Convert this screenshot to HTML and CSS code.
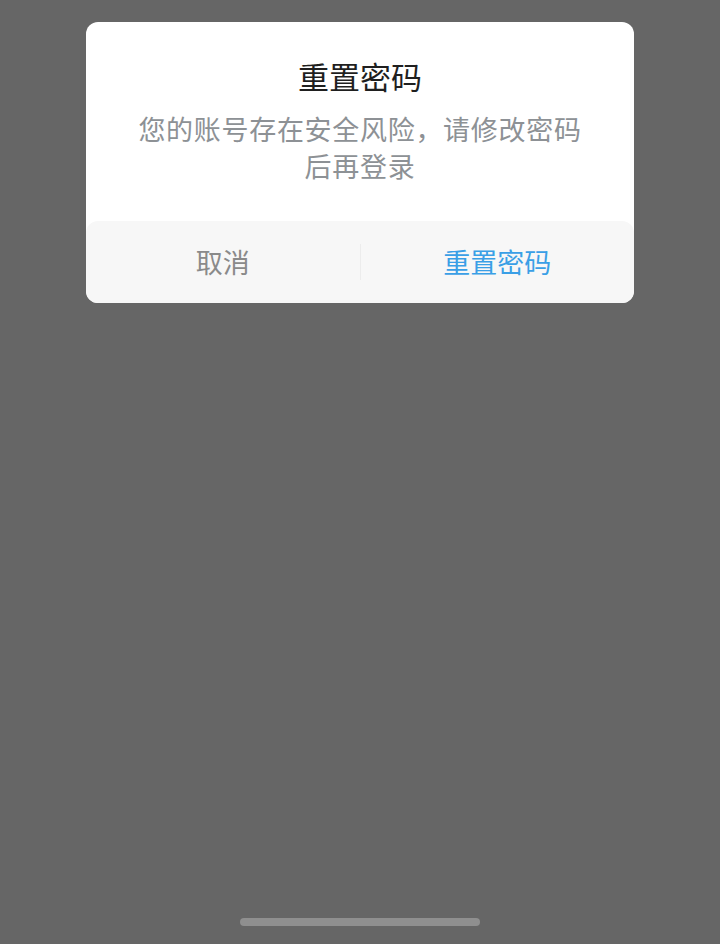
FILE: index.html
```html
<!DOCTYPE html>
<html lang="zh-CN">
<head>
<meta charset="utf-8">
<title>重置密码</title>
<link rel="stylesheet" href="styles.css">
</head>
<body>
<div class="screen">
  <div class="dialog">
    <div class="content">
      <div class="title">重置密码</div>
      <div class="message">您的账号存在安全风险，请修改密码<br>后再登录</div>
    </div>
    <div class="actions">
      <div class="btn cancel">取消</div>
      <div class="divider"></div>
      <div class="btn confirm">重置密码</div>
    </div>
  </div>
  <div class="home-bar"></div>
</div>
</body>
</html>
```

FILE: styles.css
```css
html, body {
  margin: 0;
  padding: 0;
  background: #666666;
}
.screen {
  width: 720px;
  height: 944px;
  display: flex;
  flex-direction: column;
  align-items: center;
  font-family: "Noto Sans CJK SC", "Noto Sans", sans-serif;
}
.dialog {
  margin-top: 22px;
  width: 548px;
  background: #ffffff;
  border-radius: 12px;
  overflow: hidden;
}
.content {
  padding: 34px 20px 37px;
  text-align: center;
}
.title {
  font-size: 31px;
  line-height: 40px;
  color: #1f1f1f;
}
.message {
  margin-top: 14px;
  font-size: 27px;
  line-height: 37px;
  color: #8d9195;
  letter-spacing: 0.7px;
}
.actions {
  height: 82px;
  background: #f7f7f7;
  border-radius: 12px 12px 0 0;
  display: flex;
  align-items: center;
}
.btn {
  flex: 1;
  text-align: center;
  font-size: 27px;
  line-height: 82px;
}
.cancel {
  color: #8a8a8a;
}
.confirm {
  color: #3a9fe6;
}
.divider {
  width: 1px;
  height: 36px;
  background: #ececec;
}
.home-bar {
  margin-top: auto;
  margin-bottom: 18px;
  width: 240px;
  height: 8px;
  border-radius: 4px;
  background: #8f8f8f;
}
```
